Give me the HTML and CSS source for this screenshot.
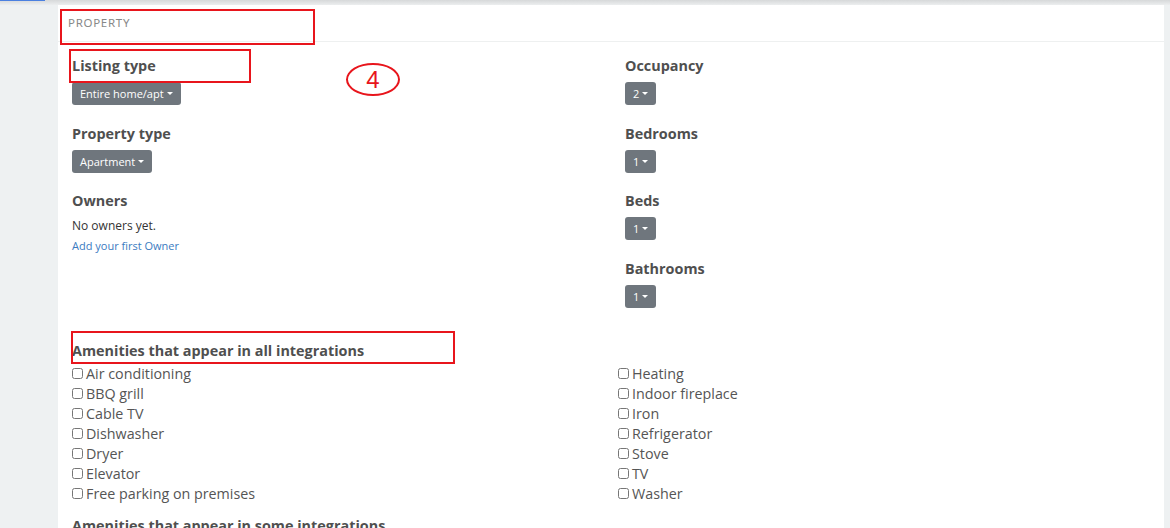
FILE: index.html
```html
<!DOCTYPE html>
<html lang="en">
<head>
    <meta charset="UTF-8">
    <meta name="viewport" content="width=device-width, initial-scale=1.0">
    <title>Property</title>
    <link rel="stylesheet" href="styles.css">
</head>
<body>
    <div class="topbar"><span class="topbar-line"></span></div>
    <div class="wrapper">
        <div class="panel">
            <div class="panel-heading">PROPERTY</div>
            <div class="panel-body">
                <div class="row">
                    <div class="col">
                        <div class="group">
                            <label class="field-label">Listing type</label>
                            <button class="dropdown">Entire home/apt <span class="caret"></span></button>
                        </div>
                        <div class="group">
                            <label class="field-label">Property type</label>
                            <button class="dropdown">Apartment <span class="caret"></span></button>
                        </div>
                        <div class="group">
                            <label class="field-label">Owners</label>
                            <p class="empty">No owners yet.</p>
                            <a class="link" href="#">Add your first Owner</a>
                        </div>
                    </div>
                    <div class="col col-right">
                        <div class="group">
                            <label class="field-label">Occupancy</label>
                            <button class="dropdown">2<span class="caret"></span></button>
                        </div>
                        <div class="group">
                            <label class="field-label">Bedrooms</label>
                            <button class="dropdown">1<span class="caret"></span></button>
                        </div>
                        <div class="group">
                            <label class="field-label">Beds</label>
                            <button class="dropdown">1<span class="caret"></span></button>
                        </div>
                        <div class="group">
                            <label class="field-label">Bathrooms</label>
                            <button class="dropdown">1<span class="caret"></span></button>
                        </div>
                    </div>
                </div>

                <h4 class="section-title">Amenities that appear in all integrations</h4>
                <div class="amenities">
                    <ul>
                        <li><input type="checkbox"> Air conditioning</li>
                        <li><input type="checkbox"> BBQ grill</li>
                        <li><input type="checkbox"> Cable TV</li>
                        <li><input type="checkbox"> Dishwasher</li>
                        <li><input type="checkbox"> Dryer</li>
                        <li><input type="checkbox"> Elevator</li>
                        <li><input type="checkbox"> Free parking on premises</li>
                    </ul>
                    <ul>
                        <li><input type="checkbox"> Heating</li>
                        <li><input type="checkbox"> Indoor fireplace</li>
                        <li><input type="checkbox"> Iron</li>
                        <li><input type="checkbox"> Refrigerator</li>
                        <li><input type="checkbox"> Stove</li>
                        <li><input type="checkbox"> TV</li>
                        <li><input type="checkbox"> Washer</li>
                    </ul>
                </div>
                <h4 class="section-title section-next">Amenities that appear in some integrations</h4>
            </div>
        </div>
    </div>

    <!-- annotation marks -->
    <div class="mark mark-heading"></div>
    <div class="mark mark-listing"></div>
    <div class="mark mark-amenities"></div>
    <div class="mark-step">4</div>
</body>
</html>
```

FILE: styles.css
```css
body {
    margin: 0;
    background-color: #eef1f2;
    font-family: "Open Sans", "Liberation Sans", sans-serif;
    color: #555;
    overflow: hidden;
}

.topbar {
    position: relative;
    height: 5px;
    background-image: linear-gradient(to bottom, #d6d8d9, #eceeef);
}

.topbar-line {
    position: absolute;
    left: 0;
    top: 0;
    width: 45px;
    height: 1px;
    background-color: #4a80e0;
}

.wrapper {
    padding: 0 6px 0 58px;
}

.panel {
    background-color: #fff;
    min-height: 600px;
}

.panel-heading {
    height: 37px;
    padding: 10px 10px 0;
    box-sizing: border-box;
    border-bottom: 1px solid #eef0f0;
    font-family: "Noto Sans", "Open Sans", sans-serif;
    font-size: 11.5px;
    color: #888;
    letter-spacing: 0.7px;
}

.panel-body {
    padding: 14px 14px 0;
}

.row {
    display: flex;
}

.col {
    width: 553px;
    flex-shrink: 0;
}

.col-right {
    flex: 1;
}

.group {
    display: flex;
    flex-direction: column;
    align-items: flex-start;
    margin-bottom: 18.7px;
}

.field-label {
    display: block;
    font-size: 14.4px;
    font-weight: bold;
    line-height: 20px;
    color: #4f4f4f;
    margin-bottom: 6px;
}

.dropdown {
    display: flex;
    align-items: center;
    height: 23px;
    padding: 0 8px;
    border: none;
    border-radius: 3px;
    background-color: #6f767d;
    color: #fff;
    font-family: "Open Sans", sans-serif;
    font-size: 11px;
}

.caret {
    display: inline-block;
    margin-left: 3px;
    border-top: 3.5px solid #fff;
    border-left: 3.5px solid transparent;
    border-right: 3.5px solid transparent;
}

.empty {
    margin: 0 0 4px;
    font-size: 12px;
    line-height: 17px;
    color: #333;
}

.link {
    display: block;
    font-size: 11px;
    line-height: 16px;
    color: #3b7bbf;
    text-decoration: none;
}

.section-title {
    margin: 14px 0 3px;
    font-size: 14.4px;
    line-height: 20px;
    color: #4f4f4f;
}

.section-next {
    margin-top: 12px;
}

.amenities {
    display: flex;
}

.amenities ul {
    list-style: none;
    margin: 0;
    padding: 0;
    width: 546px;
    flex-shrink: 0;
}

.amenities li {
    font-size: 14.3px;
    line-height: 20px;
    color: #555;
    display: flex;
    align-items: center;
}

.amenities input {
    width: 11px;
    height: 11px;
    margin: 0 3px 0 0;
}

.mark {
    position: absolute;
    border: 2px solid #e8151c;
    box-sizing: border-box;
}

.mark-heading {
    left: 60px;
    top: 9px;
    width: 255px;
    height: 36px;
}

.mark-listing {
    left: 69px;
    top: 49px;
    width: 182px;
    height: 34px;
}

.mark-amenities {
    left: 71px;
    top: 331px;
    width: 384px;
    height: 33px;
}

.mark-step {
    position: absolute;
    left: 346px;
    top: 63px;
    width: 54px;
    height: 33px;
    box-sizing: border-box;
    border: 2px solid #e8151c;
    border-radius: 50%;
    color: #e8151c;
    font-family: "Liberation Sans", sans-serif;
    font-size: 24px;
    line-height: 29px;
    text-align: center;
}
```
